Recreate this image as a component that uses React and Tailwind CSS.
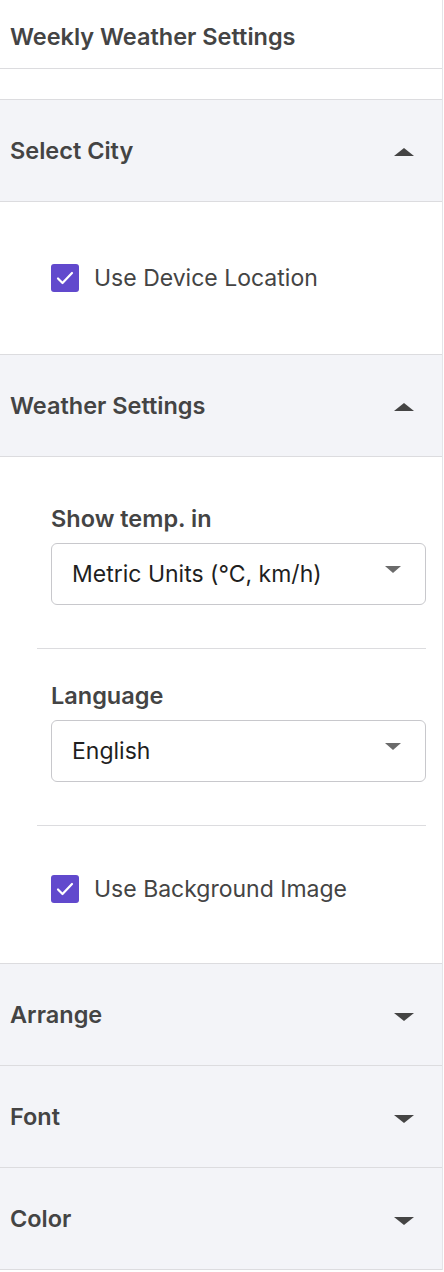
import { useState } from 'react'

const font = { fontFamily: 'Inter, "Noto Sans", sans-serif' }

function Triangle({ up }) {
  return (
    <svg width="20" height="8" viewBox="0 0 20 8" className="shrink-0">
      {up ? <path d="M10 0 L20 8 L0 8 Z" fill="#444" /> : <path d="M0 0 L20 0 L10 8 Z" fill="#444" />}
    </svg>
  )
}

function SectionHeader({ title, open, onClick }) {
  return (
    <button
      onClick={onClick}
      className="flex h-[102px] w-full items-center justify-between border-b border-[#dcdcdf] bg-[#f3f4f8] pl-[10px] pr-[28px] text-left"
    >
      <span className="text-[23.5px] leading-[28px] font-semibold text-[#444]">{title}</span>
      <span className={open ? 'mt-[2px]' : 'mt-[4px]'}>
        <Triangle up={open} />
      </span>
    </button>
  )
}

function Check({ label, checked, onChange }) {
  return (
    <label className="flex cursor-pointer items-center gap-[15px]">
      <span
        onClick={onChange}
        className="flex h-[28px] w-[28px] items-center justify-center rounded-[3px] bg-[#6149cd]"
      >
        {checked && (
          <svg width="18" height="14" viewBox="0 0 18 14">
            <path d="M2 7.5 L6.5 12 L16 2" fill="none" stroke="#fff" strokeWidth="2.2" strokeLinecap="round" strokeLinejoin="round" />
          </svg>
        )}
      </span>
      <span className="text-[23px] leading-[28px] text-[#444]">{label}</span>
    </label>
  )
}

function Select({ label, value }) {
  return (
    <div className="pl-[14px]">
      <div className="text-[23.5px] leading-[28px] font-semibold text-[#444]">{label}</div>
      <div className="mt-[10px] flex h-[62px] items-center justify-between rounded-[6px] border border-[#c8c8cc] pl-[20px] pr-[24px]">
        <span className="text-[23px] leading-[28px] text-[#1f1f1f]">{value}</span>
        <svg width="16" height="7" viewBox="0 0 16 7" className="mb-[10px]">
          <path d="M0 0 L16 0 L8 7 Z" fill="#6b6b6b" />
        </svg>
      </div>
    </div>
  )
}

export default function App() {
  const [city, setCity] = useState(true)
  const [weather, setWeather] = useState(true)
  const [useLoc, setUseLoc] = useState(true)
  const [useBg, setUseBg] = useState(true)

  return (
    <div style={font} className="w-[443px] border-r border-[#e4e4e8] bg-white">
      <div className="flex h-[69px] items-center border-b border-[#dcdcdf] px-[10px] pt-[6px]">
        <h1 className="text-[23.5px] leading-[28px] font-semibold text-[#444]">Weekly Weather Settings</h1>
      </div>
      <div className="h-[31px] border-b border-[#dcdcdf]" />

      <SectionHeader title="Select City" open={city} onClick={() => setCity(!city)} />
      {city && (
        <div className="flex h-[153px] items-center border-b border-[#dcdcdf] pl-[51px]">
          <Check label="Use Device Location" checked={useLoc} onChange={() => setUseLoc(!useLoc)} />
        </div>
      )}

      <SectionHeader title="Weather Settings" open={weather} onClick={() => setWeather(!weather)} />
      {weather && (
        <div className="border-b border-[#dcdcdf] pl-[37px] pr-[16px] pt-[48px] pb-[60px]">
          <Select label="Show temp. in" value="Metric Units (°C, km/h)" />
          <div className="mt-[43px] mb-[33px] border-t border-[#dcdcdf]" />
          <Select label="Language" value="English" />
          <div className="mt-[43px] mb-[49px] border-t border-[#dcdcdf]" />
          <div className="pl-[14px]">
            <Check label="Use Background Image" checked={useBg} onChange={() => setUseBg(!useBg)} />
          </div>
        </div>
      )}

      <SectionHeader title="Arrange" open={false} />
      <SectionHeader title="Font" open={false} />
      <SectionHeader title="Color" open={false} />
    </div>
  )
}
